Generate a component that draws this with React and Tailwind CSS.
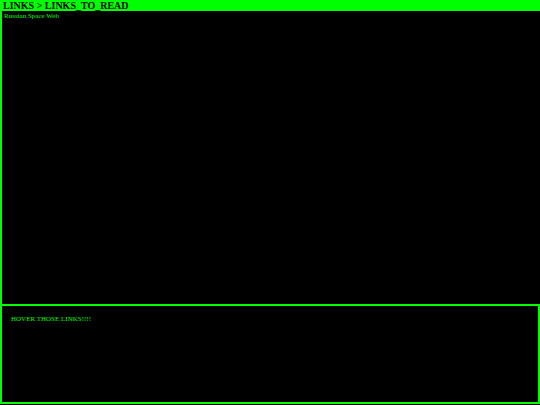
export default function App() {
  return (
    <div className="flex h-[405px] w-[540px] flex-col bg-black font-['Liberation_Serif',serif]">
      <div className="h-[11px] shrink-0 bg-[#00ff00] pl-[3px] text-[10px] font-bold leading-[11px] text-black">
        LINKS &gt; LINKS_TO_READ
      </div>
      <div className="flex-1 border-l-2 border-[#00ff00] pl-[2px] pt-[1px] text-[7px] leading-[9px] text-[#00ff00]">
        <a className="cursor-pointer">Russian Space Web</a>
      </div>
      <div className="mb-[1px] h-[100px] shrink-0 border-2 border-[#00ff00] pl-[9px] pt-[9px] text-[7px] leading-[9px] text-[#00ff00]">
        HOVER THOSE LINKS!!!!
      </div>
    </div>
  );
}
